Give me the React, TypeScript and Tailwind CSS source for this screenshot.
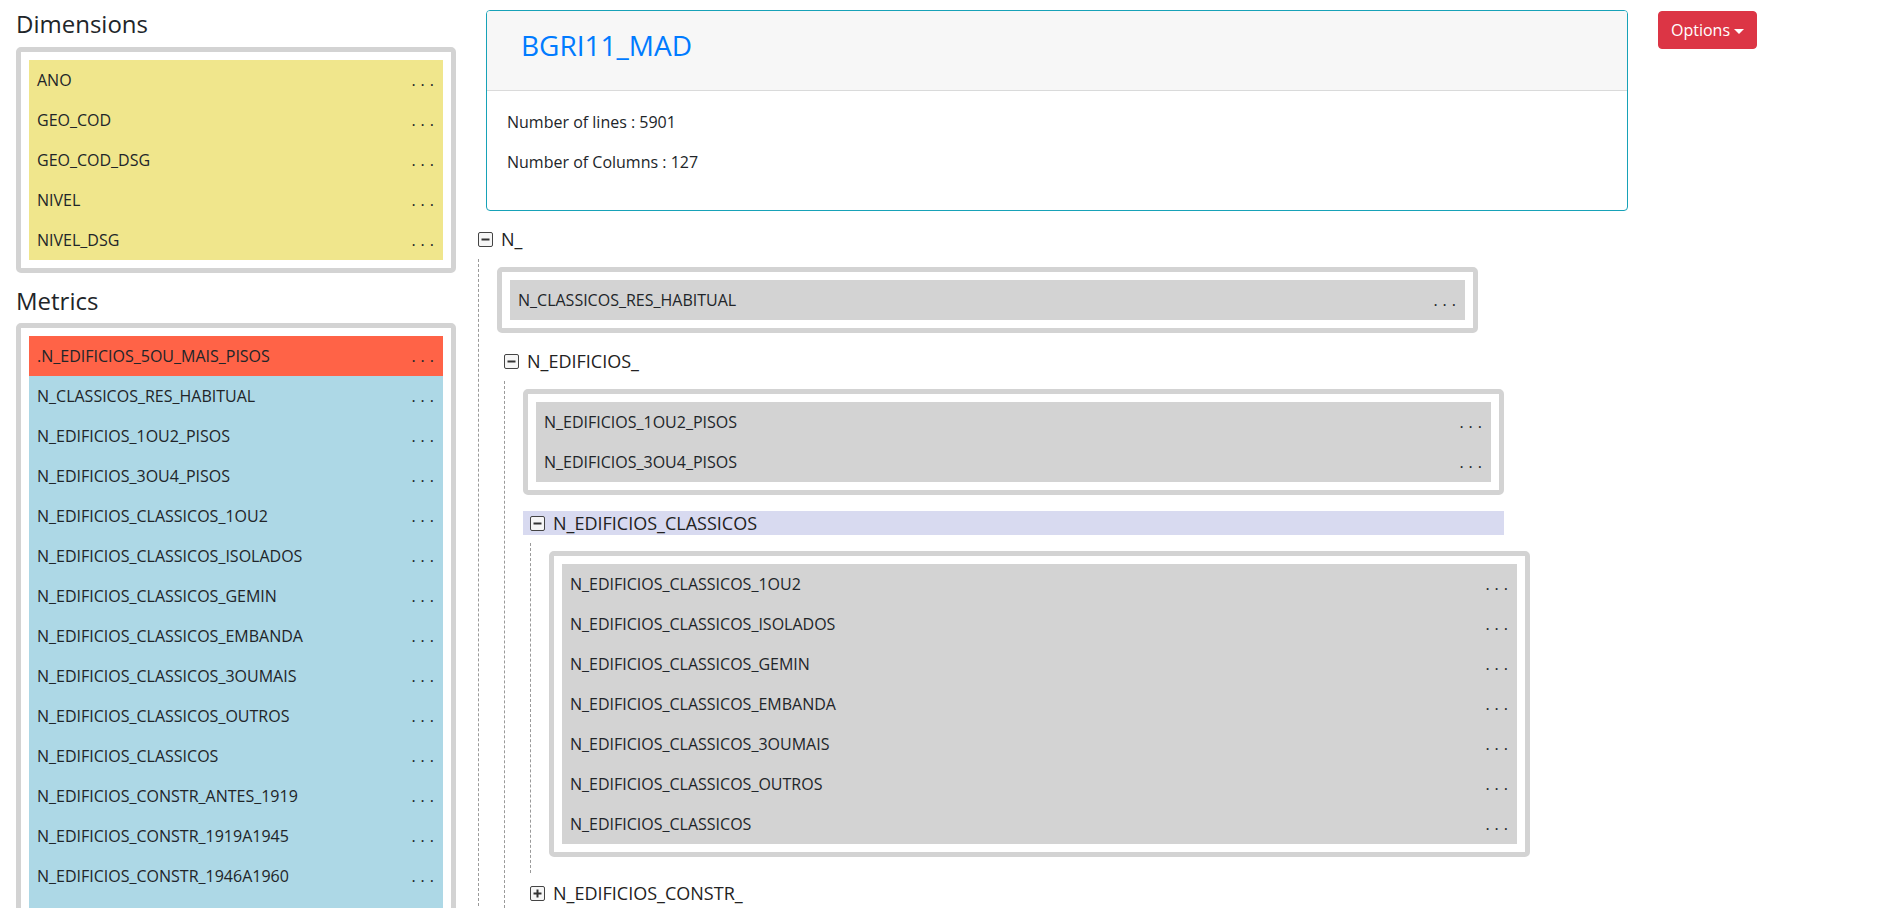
import type { ReactNode } from 'react';

const dimensions = ['ANO', 'GEO_COD', 'GEO_COD_DSG', 'NIVEL', 'NIVEL_DSG'];

const metrics = [
  'N_CLASSICOS_RES_HABITUAL',
  'N_EDIFICIOS_1OU2_PISOS',
  'N_EDIFICIOS_3OU4_PISOS',
  'N_EDIFICIOS_CLASSICOS_1OU2',
  'N_EDIFICIOS_CLASSICOS_ISOLADOS',
  'N_EDIFICIOS_CLASSICOS_GEMIN',
  'N_EDIFICIOS_CLASSICOS_EMBANDA',
  'N_EDIFICIOS_CLASSICOS_3OUMAIS',
  'N_EDIFICIOS_CLASSICOS_OUTROS',
  'N_EDIFICIOS_CLASSICOS',
  'N_EDIFICIOS_CONSTR_ANTES_1919',
  'N_EDIFICIOS_CONSTR_1919A1945',
  'N_EDIFICIOS_CONSTR_1946A1960',
  'N_EDIFICIOS_CONSTR_1961A1970',
];

const classicos = [
  'N_EDIFICIOS_CLASSICOS_1OU2',
  'N_EDIFICIOS_CLASSICOS_ISOLADOS',
  'N_EDIFICIOS_CLASSICOS_GEMIN',
  'N_EDIFICIOS_CLASSICOS_EMBANDA',
  'N_EDIFICIOS_CLASSICOS_3OUMAIS',
  'N_EDIFICIOS_CLASSICOS_OUTROS',
  'N_EDIFICIOS_CLASSICOS',
];

function Item({ name, color }: { name: string; color: string }) {
  return (
    <div className={`flex h-10 items-center justify-between pl-2 pr-[4px] text-[16px] ${color}`}>
      <span>{name}</span>
      <span className="tracking-[5px]">...</span>
    </div>
  );
}

// grey-framed group of fields
function FieldBox({ children, className = '' }: { children: ReactNode; className?: string }) {
  return (
    <div className={`rounded-[5px] border-[5px] border-[#d3d3d3] bg-white p-2 ${className}`}>
      {children}
    </div>
  );
}

function Toggle({ open }: { open: boolean }) {
  return (
    <svg width="15" height="15" viewBox="0 0 15 15" className="shrink-0">
      <rect x="0.5" y="0.5" width="14" height="14" rx="1.5" fill="#f6f6f6" stroke="#444" />
      <path d="M3.5 7.5h8" stroke="#333" strokeWidth="2" />
      {!open && <path d="M7.5 3.5v8" stroke="#333" strokeWidth="2" />}
    </svg>
  );
}

function Node({
  label,
  open = true,
  active = false,
  children,
}: {
  label: string;
  open?: boolean;
  active?: boolean;
  children?: ReactNode;
}) {
  return (
    <div className="mb-2">
      <div className={`flex h-6 w-[981px] items-center gap-2 pl-[7px] ${active ? 'bg-[#d8daf0]' : ''}`}>
        <Toggle open={open} />
        <span className="text-[18px] text-[#222]">{label}</span>
      </div>
      {open && (
        <div className="ml-[7px] mt-2 flow-root border-l border-dashed border-[#9a9a9a] pl-[18px] pt-2">
          {children}
        </div>
      )}
    </div>
  );
}

export default function App() {
  return (
    <div className="flex h-[908px] overflow-hidden bg-white pt-[10px] font-['Open_Sans',sans-serif] text-[#212529]">
      {/* Left: dimensions + metrics */}
      <div className="w-[471px] shrink-0 pl-4 pr-[15px]">
        <h4 className="mb-2 text-[24px] leading-[1.2]">Dimensions</h4>
        <FieldBox className="mb-[14px]">
          {dimensions.map((d) => (
            <Item key={d} name={d} color="bg-[#f0e68c]" />
          ))}
        </FieldBox>

        <h4 className="mb-[7px] text-[24px] leading-[1.2]">Metrics</h4>
        <FieldBox>
          <Item name=".N_EDIFICIOS_5OU_MAIS_PISOS" color="bg-[#ff6347]" />
          {metrics.map((m) => (
            <Item key={m} name={m} color="bg-[#add8e6]" />
          ))}
        </FieldBox>
      </div>

      {/* Main: table card + tree */}
      <div className="w-[1172px] shrink-0">
        <div className="ml-[15px] w-[1142px] overflow-hidden rounded-[4px] border border-[#17a2b8]">
          <div className="h-[80px] border-b border-[#dadada] bg-[#f7f7f7] pl-[34px] pt-[18px]">
            <h3 className="text-[28px] leading-[1.2] text-[#007bff]">BGRI11_MAD</h3>
          </div>
          <div className="px-5 pb-5 pt-[19px] text-[16px] leading-6">
            <p className="mb-4">Number of lines : 5901</p>
            <p className="mb-4">Number of Columns : 127</p>
          </div>
        </div>

        <div className="mt-4">
          <Node label="N_">
            <FieldBox className="mb-4 w-[981px]">
              <Item name="N_CLASSICOS_RES_HABITUAL" color="bg-[#d3d3d3]" />
            </FieldBox>
            <Node label="N_EDIFICIOS_">
              <FieldBox className="mb-4 w-[981px]">
                <Item name="N_EDIFICIOS_1OU2_PISOS" color="bg-[#d3d3d3]" />
                <Item name="N_EDIFICIOS_3OU4_PISOS" color="bg-[#d3d3d3]" />
              </FieldBox>
              <Node label="N_EDIFICIOS_CLASSICOS" active>
                <FieldBox className="mb-4 w-[981px]">
                  {classicos.map((c) => (
                    <Item key={c} name={c} color="bg-[#d3d3d3]" />
                  ))}
                </FieldBox>
              </Node>
              <Node label="N_EDIFICIOS_CONSTR_" open={false} />
            </Node>
          </Node>
        </div>
      </div>

      {/* Options dropdown */}
      <div className="ml-[15px] mt-px">
        <button className="flex items-center rounded-[4px] border border-[#dc3545] bg-[#dc3545] px-3 py-[6px] text-[16px] leading-6 text-white">
          Options
          <span className="ml-[4px] mt-[2px] h-0 w-0 border-x-[5px] border-t-[5px] border-x-transparent border-t-white" />
        </button>
      </div>
    </div>
  );
}
